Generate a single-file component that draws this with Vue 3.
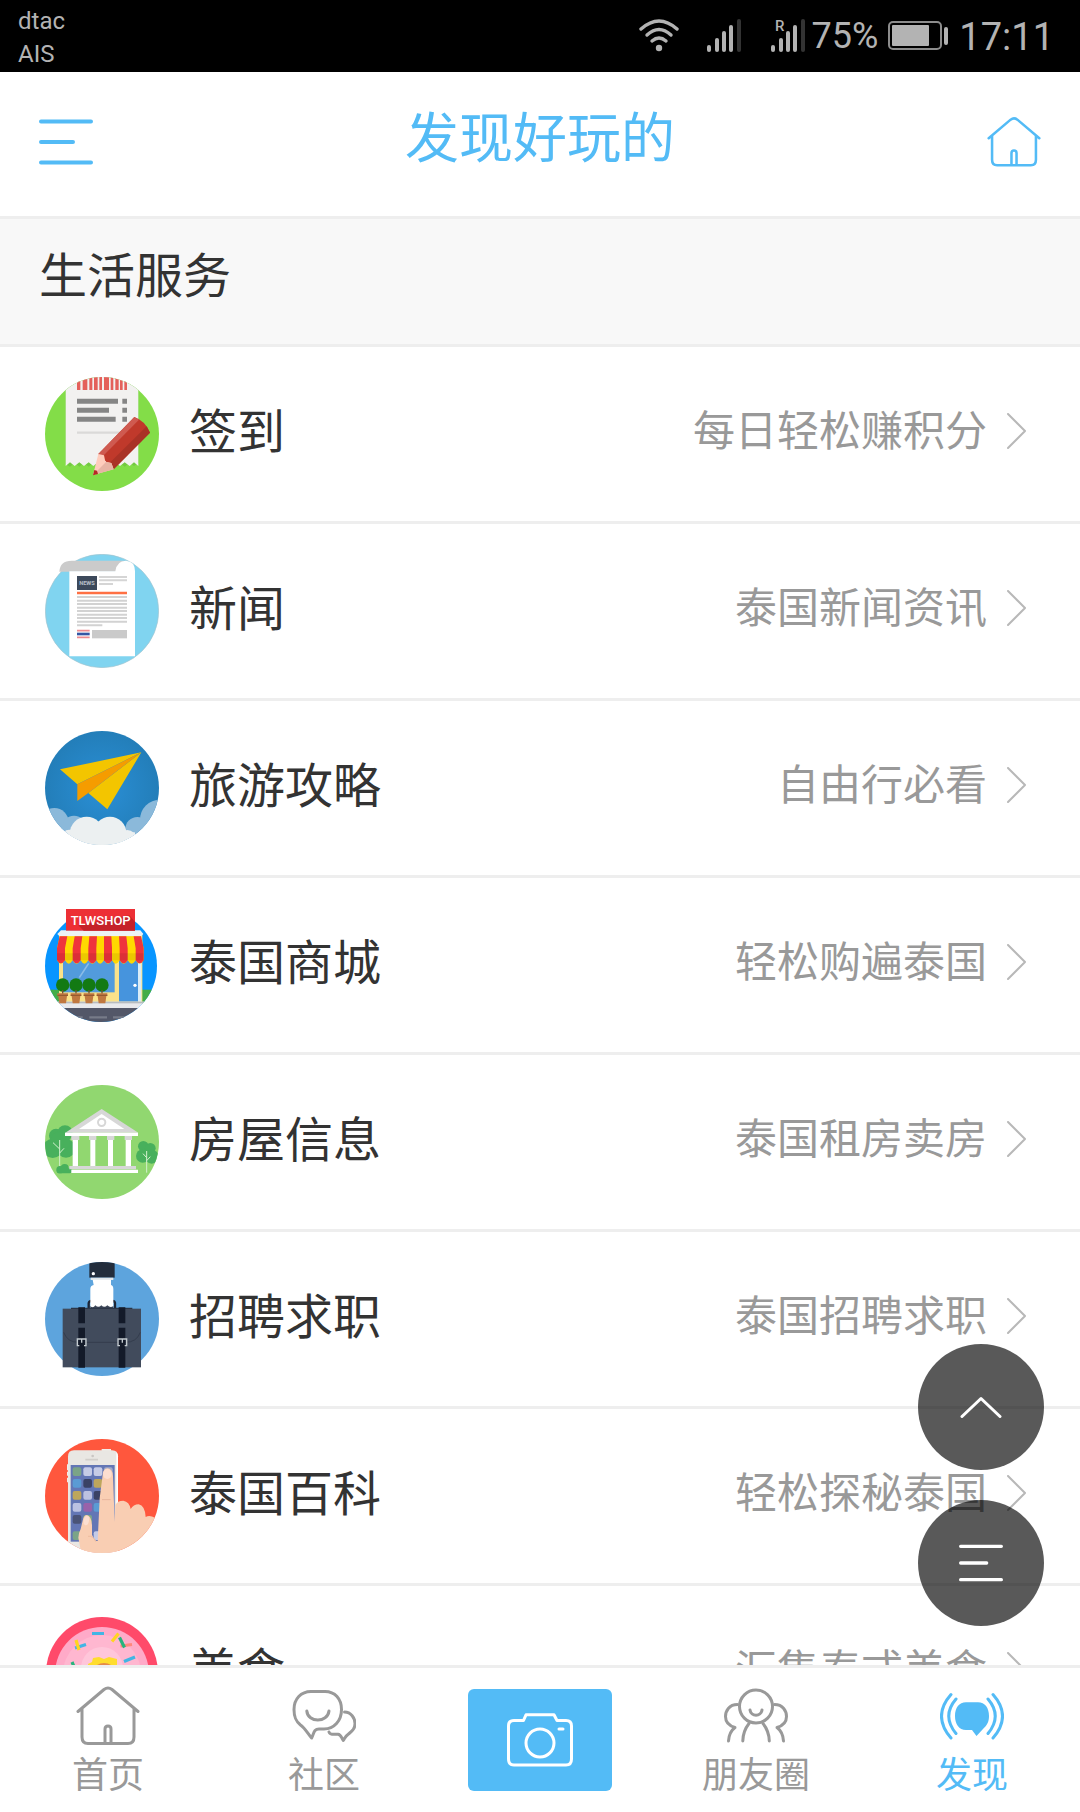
<template>
  <div class="page">
    <div class="status-bar">
      <div class="carriers">
        <span>dtac</span>
        <span>AIS</span>
      </div>
      <div class="status-icons">
        <svg class="wifi" viewBox="0 0 40 34" fill="none" stroke="#b3b3b3" stroke-width="3.4" stroke-linecap="round">
          <path d="M2 10 Q20 -6 38 10" />
          <path d="M8 16 Q20 5 32 16" />
          <path d="M13 22 Q20 16 27 22" />
          <circle cx="20" cy="29" r="3.2" fill="#b3b3b3" stroke="none" />
        </svg>
        <svg v-for="n in 2" :key="n" class="signal" viewBox="0 0 36 34">
          <rect x="1" y="26" width="4" height="7" rx="2" fill="#b3b3b3" />
          <rect x="9" y="19" width="4" height="14" rx="2" fill="#b3b3b3" />
          <rect x="16" y="12" width="4" height="21" rx="2" fill="#b3b3b3" />
          <rect x="23" y="6" width="4" height="27" rx="2" fill="#b3b3b3" />
          <rect x="31" y="0" width="4" height="33" rx="2" fill="#333" />
          <text v-if="n === 2" x="5" y="12" class="roaming">R</text>
        </svg>
        <span class="percent">75%</span>
        <svg class="battery" viewBox="0 0 61 30">
          <rect x="1" y="1" width="52" height="27" rx="4" fill="none" stroke="#8c8c8c" stroke-width="2" />
          <rect x="4" y="4" width="37" height="21" rx="1" fill="#b3b3b3" />
          <rect x="56" y="6" width="4" height="18" rx="2" fill="#b3b3b3" />
        </svg>
        <span class="clock">17:11</span>
      </div>
    </div>

    <header class="header">
      <button class="header-btn" aria-label="菜单">
        <svg class="menu-icon" viewBox="0 0 54 46">
          <path d="M2 2.5 H52 M2 23 H34 M2 43.5 H52" />
        </svg>
      </button>
      <h1>发现好玩的</h1>
      <a href="#" class="header-btn" aria-label="首页">
        <svg class="line-icon" viewBox="0 0 64 64">
          <path d="M2 27.5 L28 5.5 Q32 2.5 36 5.5 L62 27.5 M6 25 V53 Q6 59.5 12 59.5 H52 Q58 59.5 58 53 V25 M29 59.5 V45 Q29 42 32 42 Q35 42 35 45 V59.5" />
        </svg>
      </a>
    </header>

    <main class="content">
      <h2>生活服务</h2>
      <a v-for="item in services" :key="item.key" href="#" class="row">
        <svg class="row-icon" :viewBox="item.box">
          <template v-if="item.key === 'sign'">
            <clipPath id="clip-sign"><circle cx="216" cy="222" r="171" /></clipPath>
            <g clip-path="url(#clip-sign)">
              <rect x="45" y="51" width="342" height="342" fill="#83dd48" />
              <path d="M107 51 H325 V308 L312 318 L299 308 L284 320 L270 308 L256 320 L230 308 L204 320 L190 308 L176 320 L162 308 L148 320 L134 308 L120 320 L107 312Z" fill="#62b53a" opacity=".5" />
              <path d="M107 51 H325 V318 L312 307 L299 318 L284 307 L270 318 L256 307 L243 318 L230 307 L217 318 L204 307 L190 318 L176 307 L162 318 L148 307 L134 318 L120 307 L107 318Z" fill="#f2f1f0" />
              <path d="M141 51h10v39h-10z M158 51h14v39h-14z M178 51h9v39h-9z M192 51h11v39h-11z M208 51h8v39h-8z M222 51h15v39h-15z M242 51h8v39h-8z M256 51h10v39h-10z M270 51h8v39h-8z M283 51h8v39h-8z" fill="#e4605a" />
              <path d="M141 124 H264 M277 124 H291 M141 151 H237 M277 151 H291 M141 178 H257 M277 178 H291" stroke="#858585" stroke-width="15" />
              <path d="M141 218 H280" stroke="#dad9d8" stroke-width="7" />
              <path d="M205 282 L313 171 Q345 182 360 218 L251 328Z" fill="#c0392b" />
              <path d="M205 282 L313 171 L327 179 L216 291Z" fill="#cf5a50" />
              <path d="M238 310 L350 199 L360 218 L251 328Z" fill="#a93226" />
              <path d="M205 282 L189 345 L251 328 L244 309 L226 305 L222 286Z" fill="#ffccbc" />
              <path d="M189 345 L251 328 L244 309 L228 306Z" fill="#e8b4a5" />
              <path d="M193 330 L189 346 L204 342 L201 332Z" fill="#b52a24" />
            </g>
          </template>

          <template v-else-if="item.key === 'news'">
            <circle cx="216" cy="213" r="170" fill="#80d4f0" stroke="#a3c4cf" stroke-width="2" />
            <path d="M88 95 Q90 62 125 62 H290 L262 95Z" fill="#cbcbcb" />
            <path d="M118 94 H256 Q260 62 288 62 Q315 64 315 94 V349 H118Z" fill="#fff" />
            <rect x="141" y="108" width="60" height="42" fill="#3c495b" />
            <text x="171" y="136" class="news-text">NEWS</text>
            <path d="M207 111 H291 M207 121 H291 M207 132 H249" stroke="#d5d5d5" stroke-width="6" />
            <path d="M141 159 H291" stroke="#ff7043" stroke-width="8" />
            <path d="M141 171 H291 M141 182 H291 M141 192 H291 M141 203 H291 M141 213 H291 M141 224 H291 M141 234 H291 M141 245 H291 M141 256 H217" stroke="#d2d2d2" stroke-width="6" />
            <rect x="186" y="270" width="105" height="25" fill="#cacaca" />
            <path d="M141 272 H179 M141 292 H179" stroke="#ee8a8f" stroke-width="5" />
            <path d="M141 282 H179" stroke="#3556a4" stroke-width="8" />
          </template>

          <template v-else-if="item.key === 'travel'">
            <clipPath id="clip-travel"><circle cx="216" cy="219" r="171" /></clipPath>
            <radialGradient id="sky">
              <stop offset="0" stop-color="#2a8fd6" />
              <stop offset="1" stop-color="#237eb9" />
            </radialGradient>
            <g clip-path="url(#clip-travel)">
              <rect x="45" y="48" width="342" height="342" fill="url(#sky)" />
              <g fill="#8bb9da">
                <circle cx="73" cy="322" r="43" />
                <circle cx="132" cy="340" r="38" />
                <circle cx="390" cy="314" r="60" />
                <circle cx="322" cy="342" r="36" />
              </g>
              <g fill="#ecf0f1">
                <circle cx="170" cy="356" r="51" />
                <circle cx="240" cy="354" r="49" />
                <circle cx="292" cy="372" r="27" />
                <circle cx="118" cy="368" r="24" />
                <rect x="100" y="352" width="215" height="45" />
              </g>
              <path d="M90 163 L334 112 L142 208Z M334 112 L232 283 L175 234Z" fill="#f3c500" />
              <path d="M142 208 L334 112 L175 234 L142 258Z" fill="#f59c00" />
            </g>
          </template>

          <template v-else-if="item.key === 'mall'">
            <clipPath id="clip-mall"><circle cx="213" cy="228" r="168" /></clipPath>
            <g clip-path="url(#clip-mall)">
              <rect x="45" y="54" width="342" height="342" fill="#0895ff" />
              <rect x="45" y="299" width="342" height="42" fill="#43ad48" />
              <rect x="87" y="130" width="250" height="210" fill="#fae28a" />
              <rect x="99" y="205" width="155" height="102" fill="#529bdc" />
              <path d="M148 263 L176 220" stroke="#8bbce6" stroke-width="5" />
              <rect x="267" y="205" width="57" height="130" fill="#4694dd" />
              <rect x="324" y="205" width="10" height="130" fill="#d9ecf7" />
              <circle cx="315" cy="286" r="5" fill="#fff" />
              <rect x="45" y="335" width="342" height="20" fill="#e8e9ec" />
              <rect x="45" y="335" width="342" height="5" fill="#b8bcc0" />
              <rect x="45" y="354" width="342" height="42" fill="#535768" />
              <path d="M120 382 H158 M178 382 H231 M249 382 H290" stroke="#777b88" stroke-width="7" />
            </g>
            <path d="M82 132 L93 121 H331 L340 132 L334 138 H88Z" fill="#edf2f4" />
            <path d="M89 139 H333 L341 175 V210 Q329 231 317 211 Q305 231 293 211 Q281 231 269 211 Q257 231 246 211 Q234 231 222 211 Q210 231 199 211 Q187 231 175 211 Q163 231 152 211 Q140 231 128 211 Q116 231 105 211 Q92 231 81 211 V175Z" fill="#ffd900" />
            <g fill="#ef343c">
              <path d="M89 139 H112 L105 175 V211 Q92 229 81 211 V175Z" />
              <path d="M134 139 H157 L152 175 V211 Q140 229 128 211 V175Z" />
              <path d="M178 139 H201 L199 175 V211 Q187 229 175 211 V175Z" />
              <path d="M222 139 H244 L246 175 V211 Q234 229 222 211 V175Z" />
              <path d="M267 139 H289 L293 175 V211 Q281 229 269 211 V175Z" />
              <path d="M311 139 H333 L341 175 V211 Q329 229 317 211 V175Z" />
            </g>
            <path d="M81 190 H341 V211 H81Z" fill="#000" opacity=".08" />
            <rect x="108" y="57" width="207" height="65" fill="#ed2f35" />
            <path d="M145 106 L298 76 L315 95 V122 H161Z" fill="#c52229" />
            <text x="212" y="106" class="shop-text">TLWSHOP</text>
            <g v-for="x in [98, 138, 177, 216]" :key="x">
              <circle :cx="x" cy="285" r="20" fill="#137a13" />
              <path :d="`M${x} 300 v12`" stroke="#745133" stroke-width="4" />
              <path :d="`M${x - 16} 310 h32 v8 h-3 l-3 22 h-20 l-3 -22 h-3z`" fill="#c07840" />
              <path :d="`M${x - 16} 316 h32`" stroke="#8d552c" stroke-width="3" />
            </g>
          </template>

          <template v-else-if="item.key === 'house'">
            <clipPath id="clip-house"><circle cx="216" cy="216" r="171" /></clipPath>
            <g clip-path="url(#clip-house)">
              <rect x="45" y="45" width="342" height="342" fill="#91d770" />
              <g fill="#48b05c">
                <circle cx="78" cy="197" r="21" />
                <circle cx="105" cy="189" r="23" />
                <circle cx="68" cy="235" r="29" />
                <circle cx="108" cy="235" r="28" />
                <circle cx="90" cy="215" r="30" />
                <circle cx="340" cy="229" r="16" />
                <circle cx="361" cy="235" r="16" />
                <circle cx="338" cy="258" r="20" />
                <circle cx="365" cy="260" r="21" />
                <circle cx="90" cy="299" r="11" />
                <circle cx="104" cy="294" r="12" />
                <rect x="80" y="295" width="46" height="15" rx="7" />
              </g>
              <path d="M89 210 V288 M69 218 L89 237 M102 235 L89 249 M350 243 V308 M339 251 L350 263 M361 260 L350 272" stroke="#d4f0ce" stroke-width="3" fill="none" />
              <path d="M106 188 L215 117 L325 188Z" fill="#d7d7d7" />
              <path d="M147 177 L215 132 L283 177Z" fill="#fff" />
              <circle cx="215" cy="157" r="11" fill="none" stroke="#d7d7d7" stroke-width="6" />
              <rect x="105" y="188" width="219" height="10" fill="#fff" />
              <path d="M124 198h24v12h-24z M177 198h22v12h-22z M231 198h22v12h-22z M284 198h22v12h-22z M118 288h200v10h-200z" fill="#d7d7d7" />
              <path d="M128 210h16v78h-16z M181 210h15v78h-15z M234 210h15v78h-15z M287 210h16v78h-16z M124 299h200v10h-200z" fill="#fff" />
            </g>
          </template>

          <template v-else-if="item.key === 'job'">
            <clipPath id="clip-job"><circle cx="216" cy="222" r="171" /></clipPath>
            <circle cx="216" cy="222" r="171" fill="#5da4dd" />
            <rect x="178" y="51" width="76" height="47" fill="#232d3c" clip-path="url(#clip-job)" />
            <circle cx="190" cy="86" r="5" fill="#fff" />
            <path d="M182 98 H250 V105 H182Z" fill="#e1e7eb" />
            <path d="M176 190 V174 Q178 168 184 168 M255 190 V174 Q254 168 248 168" fill="none" stroke="#1d2636" stroke-width="7" />
            <path d="M188 104 H243 V120 Q250 122 250 132 V190 H181 V132 Q181 122 191 120Z" fill="#fff" />
            <path d="M181 183 Q189 191 196 181 Q205 190 214 181 Q223 190 232 181 Q241 190 250 183 V192 H181Z" fill="#3b4657" />
            <rect x="98" y="191" width="235" height="176" fill="#414b5c" />
            <path d="M123 190 H307" stroke="#2c3647" stroke-width="4" />
            <path d="M101 262 Q112 292 145 292 H286 Q320 292 331 262" fill="none" stroke="#343d4d" stroke-width="3" />
            <path d="M145 187h20v48h-20z M266 187h20v48h-20z M145 248h20v120h-20z M266 248h20v120h-20z" fill="#131a29" />
            <path d="M148 302 H142 V282 H168 V302 H162 M155 282 V293 M270 302 H264 V282 H290 V302 H284 M277 282 V293" fill="none" stroke="#c4cbd0" stroke-width="4" />
          </template>

          <template v-else-if="item.key === 'wiki'">
            <clipPath id="clip-wiki"><circle cx="216" cy="213" r="171" /></clipPath>
            <g clip-path="url(#clip-wiki)">
              <rect x="45" y="42" width="342" height="342" fill="#ff573d" />
              <path d="M111 118h5v18h-5z M111 140h5v12h-5z M111 158h5v14h-5z M215 72h28v6h-28z" fill="#f3ece7" />
              <path d="M114 400 V94 Q114 76 132 76 H246 Q264 76 264 94 V400Z" fill="#e9e7e3" />
              <path d="M259 82 Q264 86 264 94 V390 H259Z" fill="#fff" />
              <circle cx="188" cy="93" r="4" fill="#c9c6c3" />
              <path d="M166 104 H204" stroke="#d2cfcb" stroke-width="5" />
              <rect x="122" y="120" width="132" height="230" fill="#6376b5" />
              <rect v-for="app in phoneApps" :key="app.x + '-' + app.y" :x="app.x" :y="app.y" width="26" height="26" rx="6" :fill="app.color" />
              <path d="M218 150 Q219 130 233 130 Q248 132 249 153 L254 290 L256 240 Q262 227 280 227 Q298 230 302 252 Q310 238 326 238 Q345 242 347 276 Q358 269 375 278 L400 300 V390 H155 L145 338 Q145 325 152 312 L158 287 Q161 270 171 270 Q184 273 186 300 V329 Q194 349 203 348 L209 220Z" fill="#f9ceb3" />
              <ellipse cx="232" cy="147" rx="13" ry="15" fill="#fcded0" />
              <ellipse cx="169" cy="287" rx="8" ry="14" fill="#fcded0" transform="rotate(12 169 287)" />
              <path d="M216 224 H242" stroke="#e8b69d" stroke-width="3" />
              <path d="M174 334 Q190 331 197 350" fill="none" stroke="#eebd9f" stroke-width="3" />
            </g>
          </template>

          <template v-else>
            <circle cx="57" cy="57" r="56" fill="#ff4a6a" />
            <circle cx="57" cy="58" r="47" fill="#ffaac8" />
            <circle cx="57" cy="58" r="39" fill="#ffb7d0" />
            <circle cx="57" cy="52" r="21" fill="#ffc6da" />
            <path d="M43 58 V48 L47 46 L48 42 L54 41 L59 43 L64 41 L72 43 V58Z" fill="#ffdd2e" />
            <circle cx="59" cy="60" r="13" fill="#e58a48" />
            <g fill="none" stroke-width="3.2">
              <path d="M47 17.5 H59 M30 32 L41 28.5 M79 45.5 L90 41" stroke="#42b5e4" />
              <path d="M75.5 30 L87 28.5" stroke="#ff877c" />
              <path d="M73.5 17.5 L67 25.5 M31 24 L34 34" stroke="#ffd51f" />
              <path d="M74.5 21.5 L79.5 31.5 M27 46 L30 53" stroke="#26b47d" />
            </g>
          </template>
        </svg>
        <span class="row-title">{{ item.title }}</span>
        <span class="row-desc">{{ item.desc }}</span>
        <svg class="chevron" viewBox="0 0 20 36">
          <path d="M1 1 L18 18 L1 35" />
        </svg>
      </a>
    </main>

    <nav class="tab-bar">
      <a href="#" class="tab">
        <svg class="line-icon" viewBox="0 0 64 64">
          <path d="M2 27.5 L28 5.5 Q32 2.5 36 5.5 L62 27.5 M6 25 V53 Q6 59.5 12 59.5 H52 Q58 59.5 58 53 V25 M29 59.5 V45 Q29 42 32 42 Q35 42 35 45 V59.5" />
        </svg>
        <span>首页</span>
      </a>
      <a href="#" class="tab">
        <svg class="line-icon" viewBox="0 0 64 64">
          <path d="M19 7.5 H33 C43 7.5 49.5 15 49.5 25.5 C49.5 37 42 45 32 45 H27 C22 45 22 49 19.6 54 C16 50 13 44 8.5 41 C3.5 37 2 33 2 25.5 C2 15 9 7.5 19 7.5Z" />
          <path d="M14.8 27 C16 39 35.5 39 37 27" />
          <path d="M52.5 28 C59 28 63 34 63 39.5 C63 45 60 47 56.5 50 C53.5 52 53 54 51.3 56.5 C49 53 49 50.5 46 50.2 H40 Q37.5 50 37 48" />
        </svg>
        <span>社区</span>
      </a>
      <div class="tab">
        <button class="camera-btn" aria-label="拍照">
          <svg viewBox="0 0 66 54">
            <path d="M7 7.5 H16.5 L19 1.8 H47 L50 7.5 H59 Q64.5 7.5 64.5 13 V46 Q64.5 52 59 52 H7 Q1.5 52 1.5 46 V13 Q1.5 7.5 7 7.5Z" />
            <circle cx="33" cy="30" r="14" />
            <path d="M52 16 H56" />
          </svg>
        </button>
      </div>
      <a href="#" class="tab">
        <svg class="line-icon" viewBox="0 0 64 64">
          <circle cx="32" cy="22.5" r="16.5" />
          <path d="M26 26 C27 33 37 33 38 26" />
          <path d="M25 39.5 Q19 47 18.8 57 M39 39.5 Q45 47 45.3 57" />
          <path d="M13.5 20.5 C5 20.5 1.5 27 1.5 32.5 C1.5 39 6 42 11 43.5 Q5 48 4.5 57" />
          <path d="M50.5 20.5 C59 20.5 62.5 27 62.5 32.5 C62.5 39 58 42 53 43.5 Q59 48 59.5 57" />
        </svg>
        <span>朋友圈</span>
      </a>
      <a href="#" class="tab active">
        <svg class="line-icon" viewBox="0 0 64 64">
          <path d="M26 18.3 H38 C45 18.3 49 24 49 32 C49 38 47 41 43 45 L36.5 52 L32 46 H26 C19 46 15 40 15 32 C15 24 19 18.3 26 18.3Z" class="solid" />
          <path d="M11 10.5 Q-8 32 11 54 M16 15 Q1.5 32 16 49.5 M53 10.5 Q72 32 53 54 M48 15 Q62.5 32 48 49.5" />
        </svg>
        <span>发现</span>
      </a>
    </nav>

    <div class="floating">
      <button class="float-btn" aria-label="返回顶部">
        <svg class="up-icon" viewBox="0 0 42 22">
          <path d="M2 20.5 L21 2.5 L40 20.5" />
        </svg>
      </button>
      <button class="float-btn" aria-label="更多">
        <svg class="menu-icon" viewBox="0 0 54 46">
          <path d="M2 2.5 H52 M2 23 H34 M2 43.5 H52" />
        </svg>
      </button>
    </div>
  </div>
</template>

<script setup>
const services = [
  { key: 'sign', title: '签到', desc: '每日轻松赚积分', box: '45 51 342 342' },
  { key: 'news', title: '新闻', desc: '泰国新闻资讯', box: '45 42 342 342' },
  { key: 'travel', title: '旅游攻略', desc: '自由行必看', box: '45 48 342 342' },
  { key: 'mall', title: '泰国商城', desc: '轻松购遍泰国', box: '45 54 342 342' },
  { key: 'house', title: '房屋信息', desc: '泰国租房卖房', box: '45 45 342 342' },
  { key: 'job', title: '招聘求职', desc: '泰国招聘求职', box: '45 51 342 342' },
  { key: 'wiki', title: '泰国百科', desc: '轻松探秘泰国', box: '45 42 342 342' },
  { key: 'food', title: '美食', desc: '汇集泰式美食', box: '0 0 114 114' }
]

// app tiles on the phone screen
const phoneApps = [
  { x: 128, y: 127, color: '#7ba487' },
  { x: 160, y: 127, color: '#c5cbe6' },
  { x: 191, y: 127, color: '#c5cbe6' },
  { x: 222, y: 127, color: '#a2abc9' },
  { x: 128, y: 162, color: '#5a9bd4' },
  { x: 160, y: 162, color: '#3a4265' },
  { x: 191, y: 162, color: '#bda65c' },
  { x: 128, y: 198, color: '#bda65c' },
  { x: 160, y: 198, color: '#bcc2e2' },
  { x: 191, y: 198, color: '#3a4265' },
  { x: 128, y: 234, color: '#bcc2e2' },
  { x: 160, y: 234, color: '#9a62aa' },
  { x: 191, y: 234, color: '#5a9bd4' },
  { x: 128, y: 270, color: '#4a5377' },
  { x: 160, y: 270, color: '#7ba487' },
  { x: 128, y: 319, color: '#7ba487' },
  { x: 191, y: 319, color: '#c5cbe6' }
]
</script>

<style>
body {
  background: #fff;
}
</style>

<style scoped>
.page {
  height: 100vh;
  display: flex;
  flex-direction: column;
  background: #fff;
  color: #333;
  font-family: Roboto, 'Noto Sans CJK SC', sans-serif;
}

a {
  color: inherit;
  text-decoration: none;
}

button {
  border: none;
  padding: 0;
  background: none;
  cursor: pointer;
}

svg {
  display: block;
  flex: none;
}

.status-bar {
  flex: none;
  height: 72px;
  padding: 0 26px 0 18px;
  box-sizing: border-box;
  display: flex;
  justify-content: space-between;
  align-items: center;
  background: #000;
  color: #b3b3b3;
}

.carriers {
  padding-top: 4px;
  display: flex;
  flex-direction: column;
  font-size: 24px;
  line-height: 33px;
}

.status-icons {
  display: flex;
  align-items: center;
}

.wifi {
  width: 40px;
  height: 34px;
  margin-right: 27px;
}

.signal {
  width: 36px;
  height: 34px;
  margin-right: 28px;
  overflow: visible;
}

.signal + .signal {
  margin-right: 6px;
}

.roaming {
  font-size: 15px;
  font-weight: 500;
  fill: #b3b3b3;
}

.percent {
  font-size: 36px;
  line-height: 40px;
}

.battery {
  width: 61px;
  height: 30px;
  margin: 0 10px;
}

.clock {
  padding-top: 2px;
  font-size: 38px;
  line-height: 40px;
}

.header {
  flex: none;
  height: 144px;
  padding: 0 39px 4px;
  box-sizing: border-box;
  display: flex;
  align-items: center;
  justify-content: space-between;
  color: #53bbf6;
}

.header h1 {
  margin: 0;
  padding-bottom: 4px;
  font-size: 54px;
  line-height: 72px;
  font-weight: 400;
}

.header-btn {
  width: 54px;
  color: inherit;
}

.menu-icon,
.up-icon,
.chevron,
.line-icon,
.camera-btn svg {
  fill: none;
  stroke: currentColor;
  stroke-width: 3;
  stroke-linecap: round;
  stroke-linejoin: round;
}

.menu-icon {
  width: 54px;
  height: 46px;
  stroke-width: 4;
}

.header .line-icon {
  width: 54px;
  height: 54px;
}

.content {
  flex: 1;
  min-height: 0;
  overflow-y: auto;
  scrollbar-width: none;
  border-top: 3px solid #eee;
}

.content h2 {
  height: 125px;
  margin: 0;
  padding: 0 39px 10px;
  box-sizing: border-box;
  display: flex;
  align-items: center;
  background: #f8f8f8;
  font-size: 48px;
  font-weight: 400;
  line-height: 64px;
}

.row {
  height: 174px;
  padding: 0 53px 0 45px;
  display: flex;
  align-items: center;
  border-top: 3px solid #eee;
}

.row-icon {
  width: 114px;
  height: 114px;
  margin-right: 30px;
}

.news-text {
  font-size: 17px;
  font-weight: 700;
  fill: #b8c0c9;
  text-anchor: middle;
}

.shop-text {
  font-family: Roboto, sans-serif;
  font-size: 39px;
  font-weight: 500;
  fill: #fff;
  text-anchor: middle;
}

.row-title {
  flex: 1;
  padding-bottom: 2px;
  font-size: 48px;
  line-height: 64px;
}

.row-desc {
  padding-bottom: 4px;
  font-size: 42px;
  line-height: 56px;
  color: #999;
}

.chevron {
  width: 20px;
  height: 36px;
  margin: 0 0 6px 20px;
  stroke: #b8b8b8;
  stroke-width: 2;
}

.tab-bar {
  flex: none;
  height: 144px;
  display: flex;
  border-top: 3px solid #eee;
  background: #fff;
}

.tab {
  flex: 1;
  display: flex;
  flex-direction: column;
  align-items: center;
  justify-content: center;
  color: #999;
  font-size: 36px;
  line-height: 48px;
}

.tab.active {
  color: #53bbf6;
}

.tab .line-icon {
  width: 64px;
  height: 64px;
  margin: 4px 0;
}

.line-icon .solid {
  fill: currentColor;
  stroke: none;
}

.camera-btn {
  width: 144px;
  height: 102px;
  display: flex;
  align-items: center;
  justify-content: center;
  border-radius: 6px;
  background: #53bbf6;
  color: #fff;
}

.camera-btn svg {
  width: 66px;
  height: 54px;
}

.floating {
  position: fixed;
  right: 36px;
  bottom: 186px;
  display: flex;
  flex-direction: column;
  gap: 30px;
}

.float-btn {
  width: 126px;
  height: 126px;
  display: flex;
  align-items: center;
  justify-content: center;
  border-radius: 50%;
  background: rgba(0, 0, 0, 0.65);
  color: #fff;
}

.float-btn .menu-icon {
  width: 44px;
  height: 38px;
}

.up-icon {
  width: 42px;
  height: 22px;
}
</style>
